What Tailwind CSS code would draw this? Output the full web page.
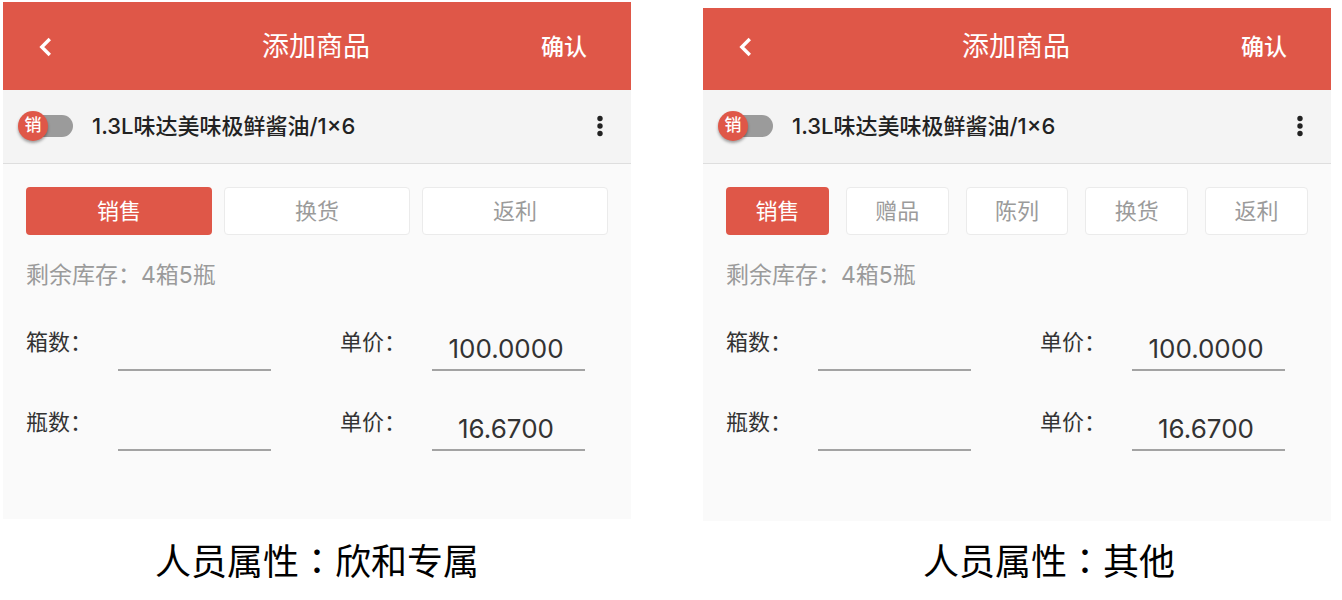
<!DOCTYPE html>
<html lang="zh-CN">

<head>
    <meta charset="UTF-8">
    <meta name="viewport" content="width=device-width, initial-scale=1.0">
    <title>添加商品</title>
    <script src="https://cdn.jsdelivr.net/npm/@tailwindcss/browser@4"></script>
</head>

<body class="bg-white font-['Inter','Noto_Sans_CJK_SC',sans-serif]">

    <main class="grid grid-cols-2 gap-[72px] pl-[3px] pr-[11px]">

        <!-- Exclusive staff -->
        <section class="pt-[2px]">
            <div class="bg-[#fafafa] pb-[68px]">
                <header class="flex items-center justify-between bg-[#df5748] h-[88px] pl-[30px] pr-[44px] pt-px text-white">
                    <button type="button" aria-label="返回" class="w-[58px]">
                        <svg class="size-6" viewBox="0 0 24 24" fill="none" stroke="currentColor" stroke-width="3.4">
                            <path d="M16.8 4L8.8 12l8 8" />
                        </svg>
                    </button>
                    <h1 class="text-[27px] leading-9">添加商品</h1>
                    <button type="button" class="text-[23px] leading-8 font-medium">确认</button>
                </header>

                <div class="flex items-center bg-[#f4f4f4] border-b border-[#dedede] h-[74px] px-[15px] pb-px">
                    <label class="relative flex items-center w-[55px] h-[30px]">
                        <input type="checkbox" class="peer sr-only">
                        <span class="ml-2 h-[22px] w-[47px] rounded-full bg-[#9b9b9b]"></span>
                        <span class="absolute left-0 flex size-[30px] items-center justify-center rounded-full bg-[#df5748] text-[17px] font-medium text-white shadow-[0_2px_3px_rgba(0,0,0,0.35)] peer-checked:left-[25px]">销</span>
                    </label>
                    <h2 class="flex-1 pl-[19px] text-[22px] leading-8 font-medium text-[#222]">1.3L味达美味极鲜酱油/1×6</h2>
                    <button type="button" aria-label="更多" class="w-8">
                        <svg class="size-8" viewBox="0 0 32 32" fill="#222">
                            <circle cx="16" cy="8.5" r="2.7" />
                            <circle cx="16" cy="16" r="2.7" />
                            <circle cx="16" cy="23.5" r="2.7" />
                        </svg>
                    </button>
                </div>

                <div class="grid grid-cols-3 gap-3 px-[23px] pt-[23px] text-[22px] leading-8">
                    <button type="button" class="h-12 rounded bg-[#df5748] text-white">销售</button>
                    <button type="button" class="h-12 rounded border border-[#ebebeb] bg-white text-[#9b9b9b]">换货</button>
                    <button type="button" class="h-12 rounded border border-[#ebebeb] bg-white text-[#9b9b9b]">返利</button>
                </div>

                <p class="px-[23px] pt-6 text-[23px] leading-8 text-[#9b9b9b]">剩余库存：4箱5瓶</p>

                <form class="grid grid-cols-2 gap-y-[35px] pt-[35px] text-[#333]">
                    <div class="flex h-[45px] pl-[23px] pr-[46px]">
                        <label for="boxes-a" class="w-[92px] text-[22px] leading-8">箱数：</label>
                        <input id="boxes-a" type="text" class="min-w-0 flex-1 border-b-2 border-[#a3a3a3] pt-px pr-[5px] text-center text-[26px] outline-none">
                    </div>
                    <div class="flex h-[45px] pl-[23px] pr-[46px]">
                        <label for="box-price-a" class="w-[92px] text-[22px] leading-8">单价：</label>
                        <input id="box-price-a" type="text" value="100.0000" class="min-w-0 flex-1 border-b-2 border-[#a3a3a3] pt-px pr-[5px] text-center text-[26px] outline-none">
                    </div>
                    <div class="flex h-[45px] pl-[23px] pr-[46px]">
                        <label for="bottles-a" class="w-[92px] text-[22px] leading-8">瓶数：</label>
                        <input id="bottles-a" type="text" class="min-w-0 flex-1 border-b-2 border-[#a3a3a3] pt-px pr-[5px] text-center text-[26px] outline-none">
                    </div>
                    <div class="flex h-[45px] pl-[23px] pr-[46px]">
                        <label for="bottle-price-a" class="w-[92px] text-[22px] leading-8">单价：</label>
                        <input id="bottle-price-a" type="text" value="16.6700" class="min-w-0 flex-1 border-b-2 border-[#a3a3a3] pt-px pr-[5px] text-center text-[26px] outline-none">
                    </div>
                </form>
            </div>
            <p class="pt-5 text-center text-4xl text-black">人员属性<span lang="zh-TW" class="font-['Noto_Sans_CJK_TC',sans-serif]">：</span>欣和专属</p>
        </section>

        <!-- Everyone else -->
        <section class="pt-2">
            <div class="bg-[#fafafa] pb-[70px]">
                <header class="flex items-center justify-between bg-[#df5748] h-[82px] pl-[30px] pr-[44px] pb-[5px] text-white">
                    <button type="button" aria-label="返回" class="w-[58px]">
                        <svg class="size-6" viewBox="0 0 24 24" fill="none" stroke="currentColor" stroke-width="3.4">
                            <path d="M16.8 4L8.8 12l8 8" />
                        </svg>
                    </button>
                    <h1 class="text-[27px] leading-9">添加商品</h1>
                    <button type="button" class="text-[23px] leading-8 font-medium">确认</button>
                </header>

                <div class="flex items-center bg-[#f4f4f4] border-b border-[#dedede] h-[74px] px-[15px] pb-px">
                    <label class="relative flex items-center w-[55px] h-[30px]">
                        <input type="checkbox" class="peer sr-only">
                        <span class="ml-2 h-[22px] w-[47px] rounded-full bg-[#9b9b9b]"></span>
                        <span class="absolute left-0 flex size-[30px] items-center justify-center rounded-full bg-[#df5748] text-[17px] font-medium text-white shadow-[0_2px_3px_rgba(0,0,0,0.35)] peer-checked:left-[25px]">销</span>
                    </label>
                    <h2 class="flex-1 pl-[19px] text-[22px] leading-8 font-medium text-[#222]">1.3L味达美味极鲜酱油/1×6</h2>
                    <button type="button" aria-label="更多" class="w-8">
                        <svg class="size-8" viewBox="0 0 32 32" fill="#222">
                            <circle cx="16" cy="8.5" r="2.7" />
                            <circle cx="16" cy="16" r="2.7" />
                            <circle cx="16" cy="23.5" r="2.7" />
                        </svg>
                    </button>
                </div>

                <div class="grid grid-cols-5 gap-[17px] px-[23px] pt-[23px] text-[22px] leading-8">
                    <button type="button" class="h-12 rounded bg-[#df5748] text-white">销售</button>
                    <button type="button" class="h-12 rounded border border-[#ebebeb] bg-white text-[#9b9b9b]">赠品</button>
                    <button type="button" class="h-12 rounded border border-[#ebebeb] bg-white text-[#9b9b9b]">陈列</button>
                    <button type="button" class="h-12 rounded border border-[#ebebeb] bg-white text-[#9b9b9b]">换货</button>
                    <button type="button" class="h-12 rounded border border-[#ebebeb] bg-white text-[#9b9b9b]">返利</button>
                </div>

                <p class="px-[23px] pt-6 text-[23px] leading-8 text-[#9b9b9b]">剩余库存：4箱5瓶</p>

                <form class="grid grid-cols-2 gap-y-[35px] pt-[35px] text-[#333]">
                    <div class="flex h-[45px] pl-[23px] pr-[46px]">
                        <label for="boxes-b" class="w-[92px] text-[22px] leading-8">箱数：</label>
                        <input id="boxes-b" type="text" class="min-w-0 flex-1 border-b-2 border-[#a3a3a3] pt-px pr-[5px] text-center text-[26px] outline-none">
                    </div>
                    <div class="flex h-[45px] pl-[23px] pr-[46px]">
                        <label for="box-price-b" class="w-[92px] text-[22px] leading-8">单价：</label>
                        <input id="box-price-b" type="text" value="100.0000" class="min-w-0 flex-1 border-b-2 border-[#a3a3a3] pt-px pr-[5px] text-center text-[26px] outline-none">
                    </div>
                    <div class="flex h-[45px] pl-[23px] pr-[46px]">
                        <label for="bottles-b" class="w-[92px] text-[22px] leading-8">瓶数：</label>
                        <input id="bottles-b" type="text" class="min-w-0 flex-1 border-b-2 border-[#a3a3a3] pt-px pr-[5px] text-center text-[26px] outline-none">
                    </div>
                    <div class="flex h-[45px] pl-[23px] pr-[46px]">
                        <label for="bottle-price-b" class="w-[92px] text-[22px] leading-8">单价：</label>
                        <input id="bottle-price-b" type="text" value="16.6700" class="min-w-0 flex-1 border-b-2 border-[#a3a3a3] pt-px pr-[5px] text-center text-[26px] outline-none">
                    </div>
                </form>
            </div>
            <p class="pt-[18px] pl-16 text-center text-4xl text-black">人员属性<span lang="zh-TW" class="font-['Noto_Sans_CJK_TC',sans-serif]">：</span>其他</p>
        </section>

    </main>

</body>

</html>
